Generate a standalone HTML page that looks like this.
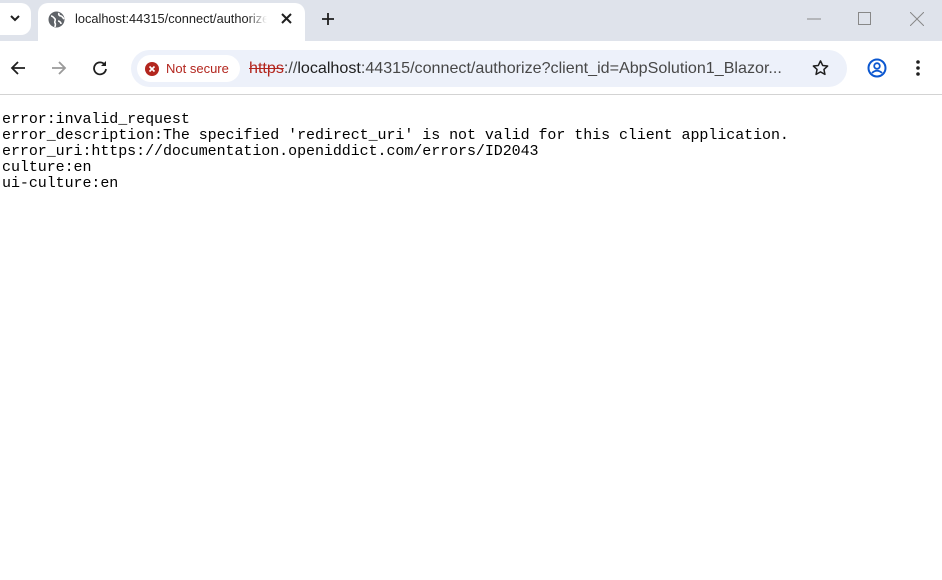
<!DOCTYPE html>
<html><head><meta charset="utf-8"><style>
*{margin:0;padding:0;box-sizing:border-box}
body{width:942px;height:580px;overflow:hidden;background:#fff;font-family:"Liberation Sans",sans-serif;position:relative}
.tabbar{position:absolute;left:0;top:0;width:942px;height:41px;background:#dfe3eb}
.dd{position:absolute;left:0;top:3px;width:31px;height:32px;background:#fff;border-radius:0 10px 10px 0}
.tab{position:absolute;left:38px;top:3px;width:267px;height:40px;background:#fff;border-radius:10px 10px 0 0}
.tabt{position:absolute;left:75px;top:11px;font-size:12.8px;color:#1f1f1f;white-space:nowrap;width:192px;overflow:hidden}
.toolbar{position:absolute;left:0;top:41px;width:942px;height:54px;background:#fff;border-bottom:1px solid #d3d3d3}
.omni{position:absolute;left:131px;top:50px;width:716px;height:37px;background:#edf1fa;border-radius:19px}
.chip{position:absolute;left:137px;top:55px;width:103px;height:27px;background:#fff;border-radius:14px}
.ns{position:absolute;left:166px;top:61px;font-size:13px;color:#b3261e}
.url{position:absolute;left:249px;top:59px;font-size:16.1px;color:#1f1f1f;white-space:nowrap}
pre{position:absolute;left:2px;top:112px;font-family:"Liberation Mono",monospace;font-size:15px;letter-spacing:-0.06px;line-height:16px;color:#000}
</style></head><body>
<div class="tabbar"></div>
<div class="dd"></div>
<svg style="position:absolute;left:9px;top:13px" width="12" height="10"><path d="M2 3l4 4 4-4" stroke="#1f1f1f" stroke-width="2" fill="none"/></svg>
<div class="tab"></div>
<svg style="position:absolute;left:48px;top:11px" width="17" height="17" viewBox="0 0 17 17"><circle cx="8.5" cy="8.5" r="8" fill="#5f6368"/><path d="M3 5c2 0 3 2 4 3s-1 3 0 4 0 3 0 4M11 2c-1 2 1 3 2 3s2 2 3 3M10 10c1 0 3 1 3 3" stroke="#fff" stroke-width="1.6" fill="none"/></svg>
<div class="tabt">localhost:44315/connect/authorize</div>
<div style="position:absolute;left:247px;top:11px;width:20px;height:18px;background:linear-gradient(90deg,rgba(255,255,255,0),#fff)"></div>
<svg style="position:absolute;left:281px;top:13px" width="11" height="11"><path d="M1 1l9 9M10 1l-9 9" stroke="#1f1f1f" stroke-width="2"/></svg>
<svg style="position:absolute;left:321px;top:12px" width="14" height="14"><path d="M7 1v12M1 7h12" stroke="#1f1f1f" stroke-width="1.8"/></svg>
<svg style="position:absolute;left:807px;top:18px" width="14" height="2"><path d="M0 1h14" stroke="#888" stroke-width="1"/></svg>
<svg style="position:absolute;left:858px;top:12px" width="13" height="13"><rect x="0.5" y="0.5" width="12" height="12" stroke="#888" fill="none"/></svg>
<svg style="position:absolute;left:910px;top:12px" width="14" height="14"><path d="M0 0l14 14M14 0L0 14" stroke="#888" stroke-width="1"/></svg>
<div class="toolbar"></div>
<svg style="position:absolute;left:10px;top:61px" width="16" height="14"><path d="M15 7H2M8 1L2 7l6 6" stroke="#1f1f1f" stroke-width="1.8" fill="none"/></svg>
<svg style="position:absolute;left:51px;top:61px" width="16" height="14"><path d="M1 7h13M8 1l6 6-6 6" stroke="#9a9a9a" stroke-width="1.8" fill="none"/></svg>
<svg style="position:absolute;left:92px;top:60px" width="16" height="16" viewBox="0 0 16 16"><path d="M13 5A6 6 0 1 0 14 9" stroke="#1f1f1f" stroke-width="1.8" fill="none"/><path d="M14 1v5h-5z" fill="#1f1f1f"/></svg>
<div class="omni"></div>
<div class="chip"></div>
<svg style="position:absolute;left:145px;top:62px" width="14" height="14" viewBox="0 0 14 14"><circle cx="7" cy="7" r="7" fill="#b3261e"/><path d="M4.5 4.5l5 5M9.5 4.5l-5 5" stroke="#fff" stroke-width="1.6"/></svg>
<div class="ns">Not secure</div>
<div class="url"><span style="color:#b3261e;text-decoration:line-through">https</span><span style="color:#474747">://</span>localhost<span style="color:#474747">:44315/connect/authorize?client_id=AbpSolution1_Blazor...</span></div>
<svg style="position:absolute;left:811px;top:59px" width="19" height="18" viewBox="0 0 24 24"><path d="M12 2.5l2.9 6.1 6.6.8-4.9 4.5 1.3 6.6L12 17.2l-5.9 3.3 1.3-6.6-4.9-4.5 6.6-.8z" stroke="#1f1f1f" stroke-width="2" fill="none" stroke-linejoin="round"/></svg>
<svg style="position:absolute;left:867px;top:58px" width="20" height="20" viewBox="0 0 20 20"><circle cx="10" cy="10" r="8.5" stroke="#0b57d0" stroke-width="2" fill="none"/><circle cx="10" cy="8" r="2.8" stroke="#0b57d0" stroke-width="1.8" fill="none"/><path d="M5 15c3-3 7-3 10 0" stroke="#0b57d0" stroke-width="1.8" fill="none"/></svg>
<svg style="position:absolute;left:915px;top:59px" width="6" height="18"><circle cx="3" cy="3" r="1.8" fill="#1f1f1f"/><circle cx="3" cy="9" r="1.8" fill="#1f1f1f"/><circle cx="3" cy="15" r="1.8" fill="#1f1f1f"/></svg>
<pre>error:invalid_request
error_description:The specified 'redirect_uri' is not valid for this client application.
error_uri:https://documentation.openiddict.com/errors/ID2043
culture:en
ui-culture:en</pre>
</body></html>
